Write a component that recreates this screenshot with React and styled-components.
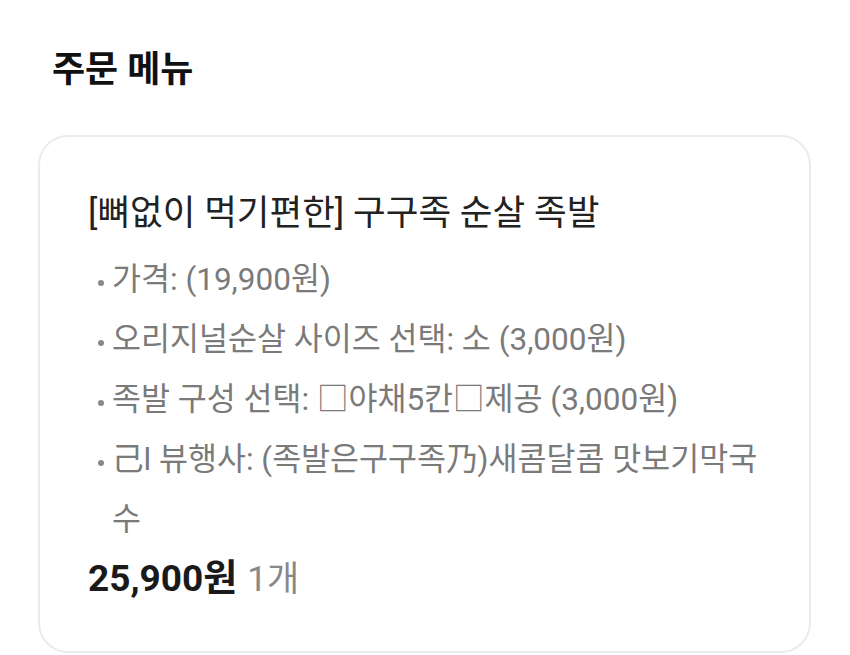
import React from 'react'
import styled, { createGlobalStyle } from 'styled-components'

const GlobalStyle = createGlobalStyle`
  body {
    margin: 0;
    background: #fff;
    font-family: Roboto, "Noto Sans CJK KR", "Noto Sans", sans-serif;
  }
`

const options = [
  '가격: (19,900원)',
  '오리지널순살 사이즈 선택: 소 (3,000원)',
  '족발 구성 선택: □야채5칸□제공 (3,000원)',
  '己l 뷰행사: (족발은구구족乃)새콤달콤 맛보기막국수',
]

function OrderMenu() {
  return (
    <Page>
      <GlobalStyle />
      <Heading>주문 메뉴</Heading>
      <Card>
        <MenuName>[뼈없이 먹기편한] 구구족 순살 족발</MenuName>
        <OptionList>
          {options.map(opt => (
            <Option key={opt}>{opt}</Option>
          ))}
        </OptionList>
        <PriceRow>
          <Price>25,900원</Price>
          <Count>1개</Count>
        </PriceRow>
      </Card>
    </Page>
  )
}

const Page = styled.div`
  padding: 49px 39px 0 38px;
`

const Heading = styled.h2`
  margin: 0 0 44px 14px;
  font-size: 36px;
  line-height: 42px;
  font-weight: 700;
  color: #111;
`

const Card = styled.div`
  border: 2px solid #ebebeb;
  border-radius: 30px;
  padding: 52px 36px 47px 48px;
`

const MenuName = styled.div`
  font-size: 35.5px;
  line-height: 48px;
  color: #222;
  margin-bottom: 13px;
`

const OptionList = styled.ul`
  margin: 0;
  padding: 0 0 0 24px;
  list-style: none;
`

const Option = styled.li`
  position: relative;
  font-size: 31.5px;
  line-height: 60px;
  color: #7a7a7a;

  &::before {
    content: '';
    position: absolute;
    left: -14px;
    top: 30px;
    width: 6px;
    height: 6px;
    border-radius: 50%;
    background: #8a8a8a;
  }
`

const PriceRow = styled.div`
  display: flex;
  align-items: baseline;
  gap: 10px;
  margin-top: 5px;
  line-height: 48px;
`

const Price = styled.span`
  font-size: 37px;
  font-weight: 700;
  color: #1a1a1a;
`

const Count = styled.span`
  font-size: 35px;
  color: #888;
`

export default OrderMenu
